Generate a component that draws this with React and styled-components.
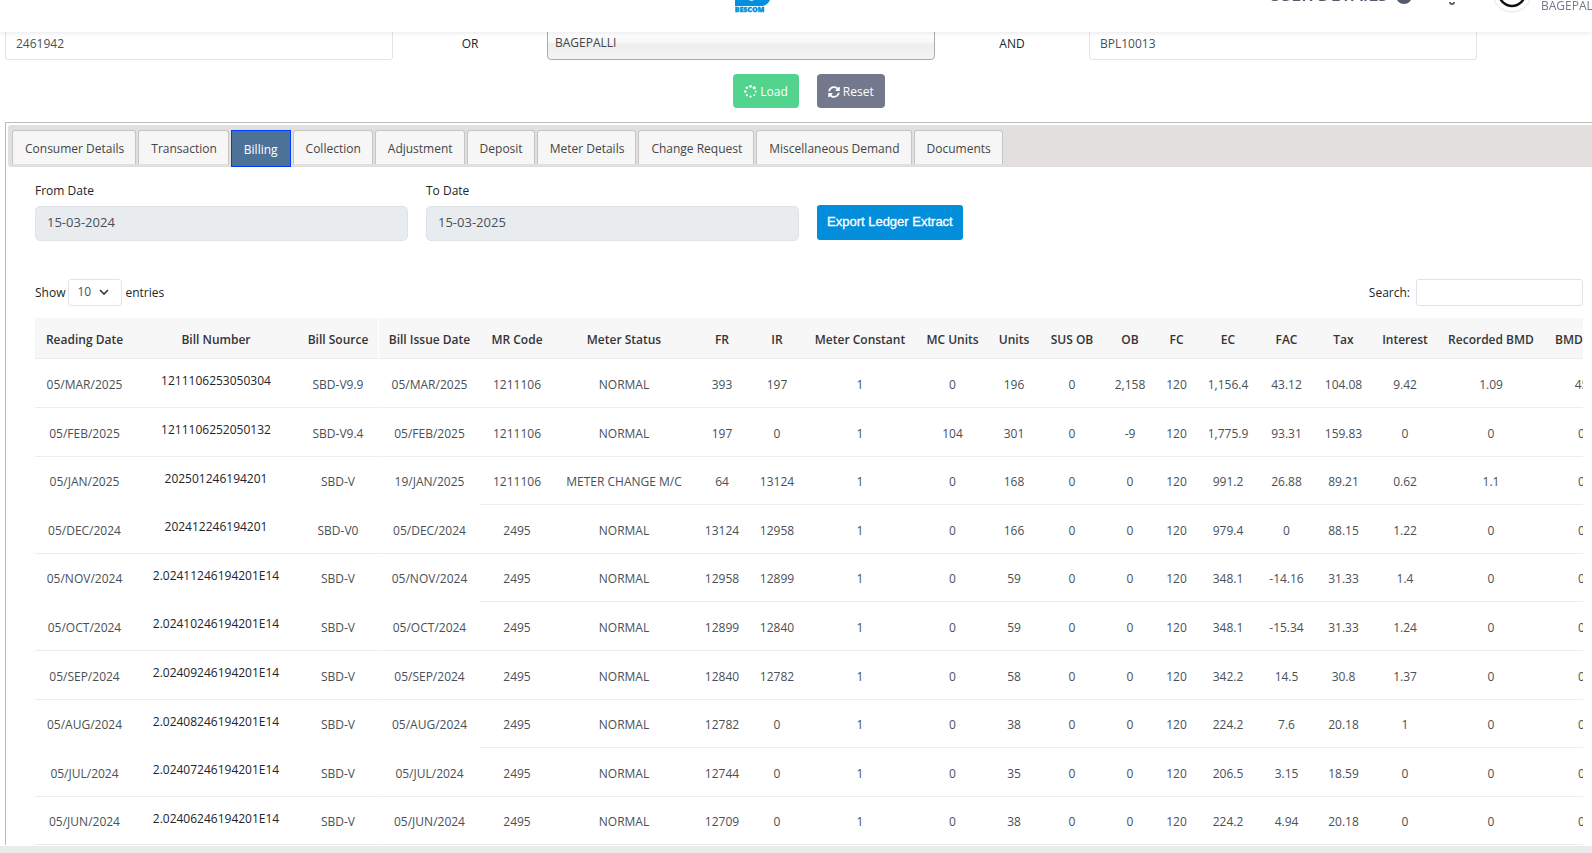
import React, { useState } from 'react';
import styled, { createGlobalStyle } from 'styled-components';
import { FaSyncAlt } from 'react-icons/fa';

const tabs = [
  'Consumer Details',
  'Transaction',
  'Billing',
  'Collection',
  'Adjustment',
  'Deposit',
  'Meter Details',
  'Change Request',
  'Miscellaneous Demand',
  'Documents'
];

const columns = [
  ['Reading Date', 99],
  ['Bill Number', 164],
  ['Bill Source', 81],
  ['Bill Issue Date', 101],
  ['MR Code', 74],
  ['Meter Status', 140],
  ['FR', 56],
  ['IR', 54],
  ['Meter Constant', 112],
  ['MC Units', 73],
  ['Units', 50],
  ['SUS OB', 66],
  ['OB', 50],
  ['FC', 43],
  ['EC', 60],
  ['FAC', 57],
  ['Tax', 57],
  ['Interest', 66],
  ['Recorded BMD', 106],
  ['BMD', 75]
];

const bills = [
  ['05/MAR/2025', '1211106253050304', 'SBD-V9.9', '05/MAR/2025', '1211106', 'NORMAL', '393', '197', '1', '0', '196', '0', '2,158', '120', '1,156.4', '43.12', '104.08', '9.42', '1.09', '45'],
  ['05/FEB/2025', '1211106252050132', 'SBD-V9.4', '05/FEB/2025', '1211106', 'NORMAL', '197', '0', '1', '104', '301', '0', '-9', '120', '1,775.9', '93.31', '159.83', '0', '0', '0'],
  ['05/JAN/2025', '202501246194201', 'SBD-V', '19/JAN/2025', '1211106', 'METER CHANGE M/C', '64', '13124', '1', '0', '168', '0', '0', '120', '991.2', '26.88', '89.21', '0.62', '1.1', '0'],
  ['05/DEC/2024', '202412246194201', 'SBD-V0', '05/DEC/2024', '2495', 'NORMAL', '13124', '12958', '1', '0', '166', '0', '0', '120', '979.4', '0', '88.15', '1.22', '0', '0'],
  ['05/NOV/2024', '2.02411246194201E14', 'SBD-V', '05/NOV/2024', '2495', 'NORMAL', '12958', '12899', '1', '0', '59', '0', '0', '120', '348.1', '-14.16', '31.33', '1.4', '0', '0'],
  ['05/OCT/2024', '2.02410246194201E14', 'SBD-V', '05/OCT/2024', '2495', 'NORMAL', '12899', '12840', '1', '0', '59', '0', '0', '120', '348.1', '-15.34', '31.33', '1.24', '0', '0'],
  ['05/SEP/2024', '2.02409246194201E14', 'SBD-V', '05/SEP/2024', '2495', 'NORMAL', '12840', '12782', '1', '0', '58', '0', '0', '120', '342.2', '14.5', '30.8', '1.37', '0', '0'],
  ['05/AUG/2024', '2.02408246194201E14', 'SBD-V', '05/AUG/2024', '2495', 'NORMAL', '12782', '0', '1', '0', '38', '0', '0', '120', '224.2', '7.6', '20.18', '1', '0', '0'],
  ['05/JUL/2024', '2.02407246194201E14', 'SBD-V', '05/JUL/2024', '2495', 'NORMAL', '12744', '0', '1', '0', '35', '0', '0', '120', '206.5', '3.15', '18.59', '0', '0', '0'],
  ['05/JUN/2024', '2.02406246194201E14', 'SBD-V', '05/JUN/2024', '2495', 'NORMAL', '12709', '0', '1', '0', '38', '0', '0', '120', '224.2', '4.94', '20.18', '0', '0', '0']
];

const App = () => {
  const [activeTab, setActiveTab] = useState('Billing');
  const [search, setSearch] = useState('');
  const rows = bills.filter((bill) => bill.join(' ').toLowerCase().includes(search.toLowerCase()));

  return (
    <>
      <GlobalStyle />
      <Header>
        <Logo viewBox="0 0 36 14" aria-label="BESCOM">
          <path d="M0 0H35C33 4 30 6 26 6H0Z" fill="#0090de" />
          <path d="M14 0H19C18 1 15 1 14 0Z" fill="#fff" />
          <text x="0" y="12">BESCOM</text>
        </Logo>
        <HeaderRight>
          <UserDetails>USER DETAILS</UserDetails>
          <InfoDot viewBox="0 0 16 16" aria-hidden="true">
            <circle cx="8" cy="8" r="8" fill="#555b6d" />
          </InfoDot>
          <Bell viewBox="0 0 8 6" aria-hidden="true">
            <path d="M1 2H3V3H5V2H7C7 6 1 6 1 2Z" fill="#555b6d" />
          </Bell>
          <Avatar viewBox="0 0 40 40" aria-hidden="true">
            <circle cx="20" cy="20" r="19" fill="#fff" stroke="#e4e4e8" />
            <circle cx="20" cy="20" r="13" fill="#fff" stroke="#111" strokeWidth="2.5" />
          </Avatar>
          <UserName>BAGEPALLI</UserName>
        </HeaderRight>
      </Header>

      <Main>
        <SearchRow>
          <TextBox aria-label="Account ID" defaultValue="2461942" />
          <Joiner>OR</Joiner>
          <SubDivision aria-label="Sub division" defaultValue="BAGEPALLI">
            <option>BAGEPALLI</option>
          </SubDivision>
          <Joiner>AND</Joiner>
          <TextBox aria-label="RR Number" defaultValue="BPL10013" />
        </SearchRow>

        <Actions>
          <ActionButton type="button" $color="#52d38e">
            <Spinner viewBox="0 0 12 12" aria-hidden="true">
              <circle cx="6" cy="1.3" r="1.3" />
              <circle cx="9.4" cy="2.6" r="1.5" />
              <circle cx="10.9" cy="6" r="0.9" />
              <circle cx="9.4" cy="9.4" r="0.9" />
              <circle cx="6" cy="10.8" r="1" />
              <circle cx="2.6" cy="9.4" r="1" />
              <circle cx="1.2" cy="6" r="1.1" />
              <circle cx="2.6" cy="2.6" r="1.2" />
            </Spinner>
            Load
          </ActionButton>
          <ActionButton type="button" $color="#74788d">
            <FaSyncAlt /> Reset
          </ActionButton>
        </Actions>

        <Panel>
          <TabBar role="tablist">
            {tabs.map((tab) => (
              <Tab
                key={tab}
                type="button"
                role="tab"
                aria-selected={tab === activeTab}
                $active={tab === activeTab}
                onClick={() => setActiveTab(tab)}
              >
                {tab}
              </Tab>
            ))}
          </TabBar>

          <Content>
            <Filters>
              <DateField>
                <label htmlFor="fromDate">From Date</label>
                <DateInput id="fromDate" value="15-03-2024" readOnly />
              </DateField>
              <DateField>
                <label htmlFor="toDate">To Date</label>
                <DateInput id="toDate" value="15-03-2025" readOnly />
              </DateField>
              <ExportButton type="button">Export Ledger Extract</ExportButton>
            </Filters>

            <TableTools>
              <ToolLabel $gap={3}>
                Show
                <SelectBox>
                  <LengthSelect defaultValue="10">
                    <option>10</option>
                    <option>25</option>
                    <option>50</option>
                  </LengthSelect>
                  <Chevron viewBox="0 0 10 7" aria-hidden="true">
                    <path d="M1 1L5 5L9 1" fill="none" stroke="#343a40" strokeWidth="1.6" />
                  </Chevron>
                </SelectBox>
                entries
              </ToolLabel>
              <ToolLabel $gap={6}>
                Search:
                <SearchInput value={search} onChange={(e) => setSearch(e.target.value)} />
              </ToolLabel>
            </TableTools>

            <TableWrapper>
              <Table>
                <colgroup>
                  {columns.map(([name, width]) => (
                    <Column key={name} $width={width} />
                  ))}
                </colgroup>
                <thead>
                  <tr>
                    {columns.map(([name]) => (
                      <th key={name}>{name}</th>
                    ))}
                  </tr>
                </thead>
                <tbody>
                  {rows.map((bill) => (
                    <tr key={bill[0]}>
                      {bill.map((value, i) => (
                        <td key={i}>{i === 1 ? <BillLink href="#bill">{value}</BillLink> : value}</td>
                      ))}
                    </tr>
                  ))}
                </tbody>
              </Table>
            </TableWrapper>
          </Content>
        </Panel>
      </Main>
      <Footer />
    </>
  );
};

export default App;

const GlobalStyle = createGlobalStyle`
  * {
    box-sizing: border-box;
  }

  body {
    margin: 0;
    overflow: hidden;
    background: #fff;
    color: #212529;
    font-family: "Open Sans", "Noto Sans", sans-serif;
    font-size: 12px;
    line-height: 18px;
  }

  button, input, select {
    font-family: inherit;
    font-size: inherit;
    line-height: inherit;
  }
`;

const Header = styled.header`
  position: fixed;
  top: 0;
  left: 0;
  right: 0;
  z-index: 2;
  height: 32px;
  display: grid;
  grid-template-columns: 735px 1fr;
  align-items: start;
  overflow: hidden;
  background: #fff;
  box-shadow: 0 1px 4px rgba(15, 34, 58, 0.1);
`;

const Logo = styled.svg`
  grid-column: 2;
  grid-row: 1;
  width: 36px;
  height: 14px;

  text {
    font-family: "Open Sans", sans-serif;
    font-size: 7px;
    font-weight: 800;
    fill: #0090de;
    stroke: #0090de;
    stroke-width: 0.4px;
  }
`;

const HeaderRight = styled.div`
  grid-column: 1 / 3;
  grid-row: 1;
  display: flex;
  justify-content: flex-end;
  align-items: flex-start;
  color: #555b6d;
`;

const UserDetails = styled.span`
  margin-top: -18px;
  margin-right: 8px;
  font-size: 18px;
  font-weight: 600;
  line-height: 24px;
`;

const InfoDot = styled.svg`
  width: 16px;
  height: 16px;
  margin-top: -12px;
  margin-right: 36px;
`;

const Bell = styled.svg`
  width: 8px;
  height: 6px;
  margin-right: 36px;
`;

const Avatar = styled.svg`
  width: 40px;
  height: 40px;
  margin-top: -27px;
  margin-right: 9px;
`;

const UserName = styled.span`
  width: 51px;
  margin-top: -3px;
  overflow: hidden;
  color: #74788d;
  font-weight: 500;
  white-space: nowrap;
`;

const Main = styled.main`
  padding: 25px 0 0 5px;
`;

const SearchRow = styled.div`
  display: grid;
  grid-template-columns: 388fr 154fr 388fr 154fr 388fr;
  align-items: center;
  margin-right: 115px;
`;

const TextBox = styled.input`
  height: 35px;
  padding: 2px 10px 0;
  border: 1px solid #e2e5e8;
  border-radius: 3px;
  color: #495057;
`;

const SubDivision = styled.select`
  height: 34px;
  padding: 0 7px;
  appearance: none;
  border: 1px solid #aaa;
  border-radius: 4px;
  background: linear-gradient(#fff 20%, #f6f6f6 50%, #eee 52%, #f4f4f4 100%);
  color: #444;
`;

const Joiner = styled.span`
  padding-top: 3px;
  text-align: center;
`;

const Actions = styled.div`
  display: flex;
  justify-content: center;
  gap: 18px;
  margin: 14px 0 14px 21px;
`;

const ActionButton = styled.button`
  display: flex;
  align-items: center;
  gap: 3px;
  height: 34px;
  padding: 1px 11px 0;
  border: 0;
  border-radius: 4px;
  background: ${({ $color }) => $color};
  color: #fff;
`;

const Spinner = styled.svg`
  width: 13px;
  height: 13px;
  fill: #fff;
`;

const Panel = styled.section`
  padding: 2px 0 0 2px;
  border: 1px solid #bbb;
  border-width: 1px 0 0 1px;
`;

const TabBar = styled.div`
  display: flex;
  gap: 2px;
  height: 42px;
  padding: 5px 4px 0;
  border-radius: 3px 0 0 3px;
  background: #e3dfdf;
`;

const Tab = styled.button`
  height: ${({ $active }) => ($active ? '37px' : '34px')};
  padding: ${({ $active }) => ($active ? '3px 12px 0' : '2px 11px 0 12px')};
  border: 1px solid ${({ $active }) => ($active ? '#003eff' : '#c5c5c5')};
  border-bottom-width: ${({ $active }) => ($active ? '1px' : '0')};
  border-radius: ${({ $active }) => ($active ? '0' : '3px 3px 0 0')};
  background: ${({ $active }) => ($active ? '#4d7298' : '#f6f6f6')};
  color: ${({ $active }) => ($active ? '#fff' : '#454545')};
  white-space: nowrap;
`;

const Content = styled.div`
  padding: 15px 9px 0 27px;
`;

const Filters = styled.div`
  display: grid;
  grid-template-columns: 373px 373px auto;
  justify-content: start;
  align-items: end;
  gap: 18px;
`;

const DateField = styled.div`
  display: flex;
  flex-direction: column;
  gap: 6px;
`;

const DateInput = styled.input`
  width: 100%;
  height: 35px;
  padding: 0 11px 3px;
  border: 1px solid #dfe3e7;
  border-radius: 5px;
  background: #e8ecef;
  color: #495057;
  font-size: 13px;
`;

const ExportButton = styled.button`
  height: 35px;
  margin-bottom: 1px;
  padding: 0 10px 2px;
  border: 0;
  border-radius: 3px;
  background: #038edc;
  color: #fff;
  font-family: "Liberation Sans", Arial, sans-serif;
  font-size: 13px;
  -webkit-text-stroke: 0.3px #fff;
`;

const TableTools = styled.div`
  display: flex;
  justify-content: space-between;
  margin: 38px 0 12px;
`;

const ToolLabel = styled.label`
  display: flex;
  align-items: center;
  gap: ${({ $gap }) => $gap}px;
`;

const SelectBox = styled.span`
  display: flex;
  align-items: center;
`;

const LengthSelect = styled.select`
  width: 54px;
  height: 27px;
  padding: 0 8px 2px;
  appearance: none;
  border: 1px solid #e2e5e8;
  border-radius: 3px;
  background: #fff;
  color: #495057;
`;

const Chevron = styled.svg`
  width: 10px;
  height: 7px;
  margin-left: -23px;
  margin-right: 13px;
  pointer-events: none;
`;

const SearchInput = styled.input`
  width: 167px;
  height: 27px;
  padding: 0 8px;
  border: 1px solid #dfe2e6;
  border-radius: 3px;
`;

const TableWrapper = styled.div`
  overflow: hidden;
`;

const Table = styled.table`
  width: 1584px;
  table-layout: fixed;
  border-collapse: separate;
  border-spacing: 0;
  text-align: center;
  white-space: nowrap;

  th {
    height: 41px;
    padding: 3px 0 0;
    border-bottom: 1px solid #ececed;
    background: #f7f7f7;
    color: #343438;
    font-weight: 600;
  }

  th:last-child {
    padding-left: 11px;
    text-align: left;
  }

  td {
    height: 49px;
    padding: 3px 0 0;
    border-bottom: 1px solid #ececee;
    color: #495057;
  }

  tr:nth-child(5n) td,
  tr:nth-child(5n + 3) td {
    height: 48px;
  }

  tr:nth-child(5n + 3) td:nth-child(-n + 4),
  tr:nth-child(5n):not(:last-child) td:nth-child(-n + 4) {
    border-bottom-color: transparent;
  }

  th:nth-child(3),
  td:nth-child(3) {
    border-right: 1px solid #fff;
  }
`;

const Column = styled.col`
  width: ${({ $width }) => $width}px;
`;

const BillLink = styled.a`
  display: block;
  padding-bottom: 7px;
  color: #212529;
  text-decoration: none;
`;

const Footer = styled.footer`
  position: fixed;
  left: 0;
  right: 0;
  bottom: 0;
  height: 7px;
  background: #ebebeb;
`;
